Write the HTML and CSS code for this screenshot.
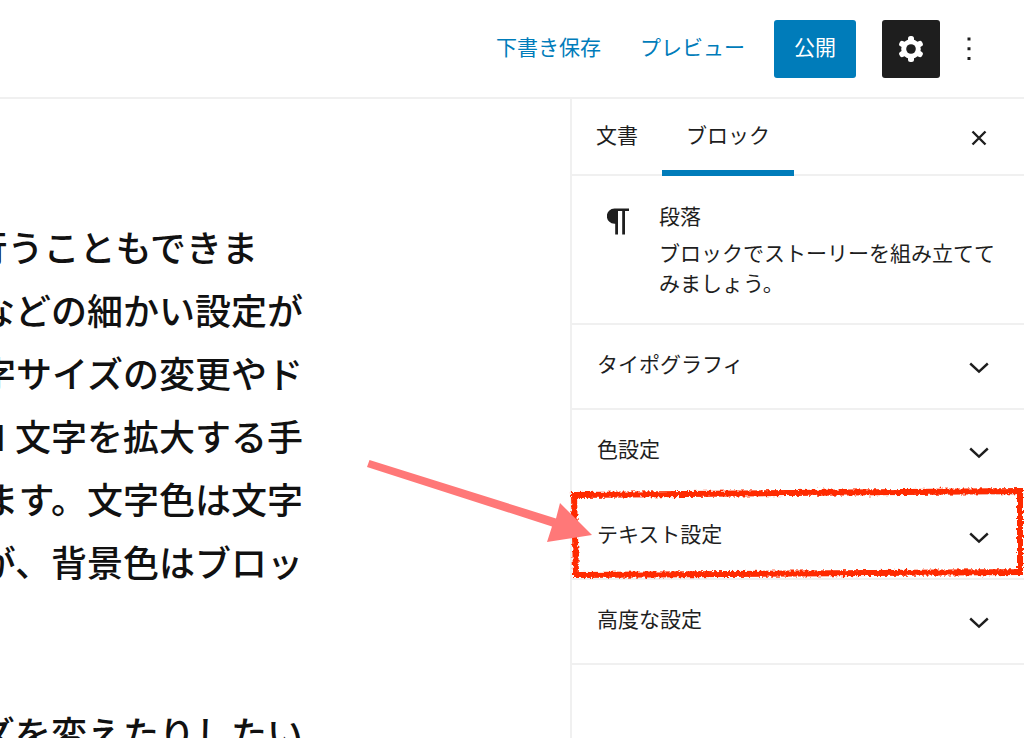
FILE: index.html
```html
<!DOCTYPE html>
<html lang="ja">
<head>
<meta charset="utf-8">
<meta name="viewport" content="width=device-width, initial-scale=1">
<title>投稿を編集</title>
<link rel="stylesheet" href="styles.css">
</head>
<body>
<div class="app">
  <header class="toolbar">
    <button class="link-button" type="button">下書き保存</button>
    <button class="link-button" type="button">プレビュー</button>
    <button class="publish" type="button">公開</button>
    <button class="settings" type="button" aria-label="設定">
      <svg class="gear" viewBox="0 0 26 26" aria-hidden="true">
        <g fill="#fff">
          <rect x="10" y="0" width="6" height="26" rx="2.5"/>
          <rect x="10" y="0" width="6" height="26" rx="2.5" transform="rotate(60 13 13)"/>
          <rect x="10" y="0" width="6" height="26" rx="2.5" transform="rotate(120 13 13)"/>
          <circle cx="13" cy="13" r="9.8"/>
        </g>
        <circle cx="13" cy="13" r="4.8" fill="#1e1e1e"/>
      </svg>
    </button>
    <button class="more" type="button" aria-label="オプション">
      <svg class="dots" viewBox="0 0 4 24" aria-hidden="true"><path d="M.5.5h3v3h-3zM.5 10.3h3v3h-3zM.5 20h3v3h-3z"/></svg>
    </button>
  </header>
  <div class="workspace">
    <main class="editor">
      <p class="paragraph">
        <span class="line line-short">行うこともできま</span>
        <span class="line">などの細かい設定が</span>
        <span class="line">字サイズの変更やド</span>
        <span class="line">1 文字を拡大する手</span>
        <span class="line">ます。文字色は文字</span>
        <span class="line">が、背景色はブロッ</span>
      </p>
      <p class="paragraph">
        <span class="line">ズを変えたりしたい</span>
      </p>
    </main>
    <aside class="sidebar">
      <div class="tabs">
        <button class="tab" type="button">文書</button>
        <button class="tab tab-active" type="button">ブロック</button>
        <button class="close" type="button" aria-label="閉じる">
          <svg class="cross" viewBox="0 0 16 16" aria-hidden="true"><path d="M1.500 1.500l13 13M14.500 1.500L1.500 14.500"/></svg>
        </button>
      </div>
      <section class="card">
        <svg class="pilcrow" viewBox="0 0 22 27" aria-hidden="true"><path d="M8 0.5H22V3H18V26.5H15.200V3H11V26.5H8.200V15.800H7.500A7.650 7.650 0 0 1 7.500 0.500Z"/></svg>
        <div class="card-text">
          <h2 class="card-title">段落</h2>
          <p class="card-description">ブロックでストーリーを組み立ててみましょう。</p>
        </div>
      </section>
      <button class="panel" type="button">タイポグラフィ
        <svg class="chevron" viewBox="0 0 20 12" aria-hidden="true"><path d="M1.200 1.500L10 9.600L18.800 1.500"/></svg>
      </button>
      <button class="panel" type="button">色設定
        <svg class="chevron" viewBox="0 0 20 12" aria-hidden="true"><path d="M1.200 1.500L10 9.600L18.800 1.500"/></svg>
      </button>
      <div class="highlighted">
        <button class="panel" type="button">テキスト設定
          <svg class="chevron" viewBox="0 0 20 12" aria-hidden="true"><path d="M1.200 1.500L10 9.600L18.800 1.500"/></svg>
        </button>
        <svg class="annotation" viewBox="0 0 664 130" aria-hidden="true">
          <defs>
            <filter id="crayon" x="-5%" y="-10%" width="110%" height="120%">
              <feTurbulence type="fractalNoise" baseFrequency="0.35" numOctaves="2" seed="4" result="noise"/>
              <feDisplacementMap in="SourceGraphic" in2="noise" scale="5" xChannelSelector="R" yChannelSelector="G"/>
            </filter>
          </defs>
          <path class="frame" filter="url(#crayon)" d="M214 35L660 31V112L216 115Z"/>
          <path class="arrow" d="M9.500 0L196 58.500L200 43L232 75L187 82L192 66.500L7 7Z"/>
        </svg>
      </div>
      <button class="panel" type="button">高度な設定
        <svg class="chevron" viewBox="0 0 20 12" aria-hidden="true"><path d="M1.200 1.500L10 9.600L18.800 1.500"/></svg>
      </button>
    </aside>
  </div>
</div>
</body>
</html>
```
FILE: styles.css
```css
* {
  box-sizing: border-box;
}

body {
  margin: 0;
  background: #fff;
  color: #1e1e1e;
  font-family: Inter, "Noto Sans CJK JP", sans-serif;
  font-size: 21px;
  line-height: 30px;
}

button {
  margin: 0;
  padding: 0;
  border: 0;
  background: none;
  color: inherit;
  font: inherit;
  cursor: pointer;
}

svg {
  display: block;
  flex: none;
}

.app {
  display: flex;
  flex-direction: column;
  height: 100vh;
  overflow: hidden;
}

.toolbar {
  display: flex;
  flex: none;
  align-items: center;
  justify-content: flex-end;
  padding: 20px 53px 19px 24px;
  border-bottom: 2px solid #f0f0f0;
}

.link-button {
  margin-right: 39px;
  padding-bottom: 2px;
  color: #007cba;
}

.link-button + .publish {
  margin-left: -10px;
}

.publish {
  height: 58px;
  margin-right: 26px;
  padding: 0 20px 2px;
  border-radius: 3px;
  background: #007cba;
  color: #fff;
}

.settings {
  display: flex;
  align-items: center;
  justify-content: center;
  width: 58px;
  height: 58px;
  margin-right: 27px;
  border-radius: 3px;
  background: #1e1e1e;
}

.gear {
  width: 26px;
  height: 26px;
}

.dots {
  width: 4px;
  height: 24px;
  fill: #1e1e1e;
}

.workspace {
  display: flex;
  flex: 1;
  min-height: 0;
}

.editor {
  display: flex;
  flex: 1;
  flex-direction: column;
  gap: 108px;
  min-width: 0;
  padding: 119px 267px 0 0;
  overflow: hidden;
  color: #111;
  font-size: 36px;
  font-weight: 500;
  line-height: 63px;
}

.paragraph {
  margin: 0;
}

.line {
  display: flex;
  justify-content: flex-end;
  white-space: nowrap;
}

.line-short {
  padding-right: 45px;
}

.sidebar {
  flex: none;
  width: 454px;
  border-left: 2px solid #f0f0f0;
}

.tabs {
  display: flex;
  height: 77px;
  border-bottom: 2px solid #f0f0f0;
}

.tab {
  height: 77px;
  padding: 6px 24px 4px;
  border-bottom: 6px solid transparent;
}

.tab-active {
  border-bottom-color: #007cba;
}

.close {
  margin-left: auto;
  padding: 2px 37px 0 24px;
}

.cross {
  width: 16px;
  height: 16px;
  fill: none;
  stroke: #1e1e1e;
  stroke-width: 2.400;
}

.card {
  display: flex;
  gap: 30px;
  padding: 26px 24px 24px 35px;
  border-bottom: 2px solid #f0f0f0;
}

.pilcrow {
  width: 22px;
  height: 27px;
  margin-top: 6px;
  fill: #1e1e1e;
}

.card-title {
  margin: 0 0 7px;
  font-size: 21px;
  font-weight: 400;
}

.card-description {
  margin: 0;
}

.panel {
  display: flex;
  align-items: center;
  justify-content: space-between;
  width: 100%;
  height: 85px;
  padding: 0 35px 3px 25px;
  border-bottom: 2px solid #f0f0f0;
  text-align: left;
}

.chevron {
  width: 20px;
  height: 12px;
  margin-top: 5px;
  fill: none;
  stroke: #1e1e1e;
  stroke-width: 2.400;
}

.highlighted {
  position: relative;
}

/* Hand-drawn frame and arrow laid over the row */
.annotation {
  position: absolute;
  right: 0;
  bottom: -10px;
  width: 664px;
  height: 130px;
  pointer-events: none;
}

.frame {
  fill: none;
  stroke: #ff2a00;
  stroke-width: 6;
}

.arrow {
  fill: #ff7878;
}
```
